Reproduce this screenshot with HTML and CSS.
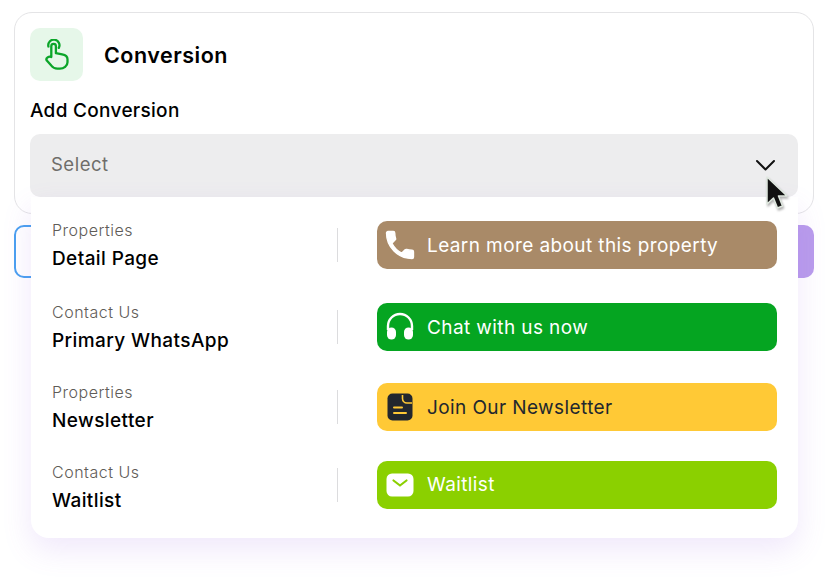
FILE: index.html
```html
<!DOCTYPE html>
<html lang="en">
<head>
    <meta charset="UTF-8">
    <meta name="viewport" content="width=device-width, initial-scale=1.0">
    <title>Conversion</title>
    <link rel="stylesheet" href="styles.css">
</head>
<body>

    <div class="page">
        <div class="card">
            <div class="card-head">
                <div class="icon-tile">
                    <svg width="24" height="32" viewBox="0 0 24 32" fill="none" stroke="#0ba529" stroke-width="2.3" stroke-linecap="round" stroke-linejoin="round">
                        <path d="M3.400 7.500a5.600 5.600 0 1 1 10.400 1.400"/>
                        <path d="M6.300 18V7.200a2.300 2.300 0 0 1 4.600 0v7l6.200 1.200c2.600.5 5.400 2 5.400 4.800v3c0 3.800-3.800 6.400-7.600 6.400h-2.600c-2.600 0-4.400-1-6-3l-4.500-5c-1.600-2.300 2.300-5 4.500-3.600z"/>
                    </svg>
                </div>
                <h2 class="card-title">Conversion</h2>
            </div>
            <label class="field-label">Add Conversion</label>
            <div class="select-box">
                <span>Select</span>
                <svg class="chevron" width="21" height="13" viewBox="0 0 21 13" fill="none" stroke="#111" stroke-width="2" stroke-linecap="round" stroke-linejoin="round">
                    <path d="M2 2l8.500 8.500L19 2"/>
                </svg>
            </div>
        </div>

        <div class="under-row">
            <div class="under-blue"></div>
            <div class="under-purple"></div>
        </div>

        <div class="dropdown">
            <div class="option option-first">
                <div class="option-text">
                    <p class="option-group">Properties</p>
                    <p class="option-name">Detail Page</p>
                </div>
                <div class="divider"></div>
                <div class="cta cta-brown">
                    <svg class="cta-icon" width="30" height="30" viewBox="2 2 20 20" fill="#fff" stroke="#fff" stroke-width="0.9" stroke-linejoin="round">
                        <path d="M6.620 10.790c1.440 2.830 3.760 5.140 6.590 6.590l2.200-2.200c.27-.27.67-.36 1.020-.24 1.120.37 2.330.57 3.570.57.55 0 1 .45 1 1V20c0 .55-.45 1-1 1-9.390 0-17-7.610-17-17 0-.55.45-1 1-1h3.500c.55 0 1 .45 1 1 0 1.250.2 2.450.57 3.570.11.35.03.74-.25 1.020l-2.200 2.200z"/>
                    </svg>
                    <span>Learn more about this property</span>
                </div>
            </div>

            <div class="option option-second">
                <div class="option-text">
                    <p class="option-group">Contact Us</p>
                    <p class="option-name">Primary WhatsApp</p>
                </div>
                <div class="divider"></div>
                <div class="cta cta-green">
                    <svg class="cta-icon" width="30" height="30" viewBox="0 0 30 30" fill="#fff">
                        <path d="M3 18v-4a12 12 0 0 1 24 0v4" fill="none" stroke="#fff" stroke-width="2.4"/>
                        <rect x="2" y="15.500" width="9" height="12" rx="4.500"/>
                        <rect x="19" y="15.500" width="9" height="12" rx="4.500"/>
                    </svg>
                    <span>Chat with us now</span>
                </div>
            </div>

            <div class="option option-third">
                <div class="option-text">
                    <p class="option-group">Properties</p>
                    <p class="option-name">Newsletter</p>
                </div>
                <div class="divider"></div>
                <div class="cta cta-yellow">
                    <svg class="cta-icon" width="30" height="30" viewBox="0 0 30 30" fill="none">
                        <rect x="2.500" y="1.500" width="25" height="27" rx="5" fill="#22272e"/>
                        <path d="M17.500 3v3.500a4.500 4.500 0 0 0 4.500 4.500h5" stroke="#ffc936" stroke-width="1.600"/>
                        <path d="M9 15.500h8M9 21h12" stroke="#ffc936" stroke-width="2" stroke-linecap="round"/>
                    </svg>
                    <span>Join Our Newsletter</span>
                </div>
            </div>

            <div class="option option-fourth">
                <div class="option-text">
                    <p class="option-group">Contact Us</p>
                    <p class="option-name">Waitlist</p>
                </div>
                <div class="divider"></div>
                <div class="cta cta-lime">
                    <svg class="cta-icon" width="30" height="30" viewBox="0 0 30 30" fill="none">
                        <rect x="1.500" y="3.500" width="27" height="23" rx="5.500" fill="#fff"/>
                        <path d="M8.500 10.500l6.500 5 6.500-5" stroke="#8bd000" stroke-width="2.200" stroke-linecap="round" stroke-linejoin="round"/>
                    </svg>
                    <span>Waitlist</span>
                </div>
            </div>
        </div>

        <svg class="cursor" width="24" height="36" viewBox="0 0 24 36">
            <path d="M3 2v27l6.500-6 4 10 5-2-4-10h8.500z" fill="#111" stroke="#dfe8df" stroke-width="1.500" stroke-linejoin="round"/>
        </svg>
    </div>

</body>
</html>
```

FILE: styles.css
```css
body {
    margin: 0;
    background-color: #fff;
    font-family: "Inter", "Liberation Sans", sans-serif;
    overflow: hidden;
}
p {
    margin: 0;
}
.page {
    position: relative;
    width: 825px;
    height: 579px;
    padding: 12px 11px 0 14px;
    box-sizing: border-box;
}
.card {
    height: 202px;
    box-sizing: border-box;
    padding: 15px 15px 0;
    border: 1px solid #e4e4e6;
    border-radius: 18px;
    background-color: #fff;
}
.card-head {
    display: flex;
    align-items: center;
    gap: 21px;
}
.icon-tile {
    width: 53px;
    height: 53px;
    border-radius: 10px;
    background-color: #e6f7e9;
    display: flex;
    align-items: center;
    justify-content: center;
}
.card-title {
    margin: 0;
    font-size: 21.5px;
    font-weight: 600;
    letter-spacing: 0.5px;
    color: #000;
}
.field-label {
    display: block;
    margin-top: 18px;
    font-size: 19px;
    font-weight: 500;
    line-height: 24px;
    letter-spacing: 0.3px;
    color: #000;
}
.select-box {
    height: 63px;
    margin-top: 11px;
    padding: 0 22px 0 21px;
    border-radius: 10px;
    background-color: #ededee;
    display: flex;
    align-items: center;
    justify-content: space-between;
    font-size: 18.5px;
    letter-spacing: 0.5px;
    color: #6f6d6a;
}
.select-box span {
    margin-bottom: 4px;
}
.under-row {
    display: flex;
    justify-content: space-between;
    margin-top: 11px;
}
.under-blue {
    width: 40px;
    height: 53px;
    box-sizing: border-box;
    border: 2px solid #4aa0f0;
    border-radius: 10px;
}
.under-purple {
    width: 40px;
    height: 53px;
    border-radius: 10px;
    background-color: #b99cec;
}
.dropdown {
    position: absolute;
    left: 31px;
    top: 197px;
    width: 767px;
    height: 341px;
    box-sizing: border-box;
    padding: 24px 21px 0;
    background-color: #fff;
    border-radius: 0 0 18px 18px;
    box-shadow: 0 12px 30px rgba(150, 90, 230, 0.14);
}
.option {
    display: flex;
    align-items: center;
    height: 48px;
}
.option-second {
    margin-top: 34px;
}
.option-third {
    margin-top: 32px;
}
.option-fourth {
    margin-top: 30px;
}
.option-text {
    width: 285px;
}
.option-fourth .option-text {
    padding-top: 4px;
}
.option-group {
    padding-top: 1px;
    font-size: 16px;
    font-weight: 300;
    line-height: 20px;
    letter-spacing: 0.5px;
    color: #5f5c58;
}
.option-name {
    margin-top: 7px;
    font-size: 19px;
    font-weight: 500;
    line-height: 24px;
    letter-spacing: 0.4px;
    color: #000;
}
.divider {
    width: 1px;
    height: 34px;
    background-color: #dcdcde;
}
.cta {
    margin-left: 39px;
    width: 400px;
    height: 48px;
    box-sizing: border-box;
    padding-left: 8px;
    border-radius: 10px;
    display: flex;
    align-items: center;
    gap: 12px;
    font-size: 19px;
    letter-spacing: 0.4px;
    color: #fff;
}
.cta-brown {
    background-color: #a98a68;
}
.cta-green {
    background-color: #05a521;
}
.cta-yellow {
    background-color: #ffc936;
    color: #22272e;
}
.cta-lime {
    background-color: #8bd000;
}
.cta-lime span {
    margin-bottom: 2px;
}
.cursor {
    position: absolute;
    left: 764px;
    top: 175px;
    filter: drop-shadow(1px 2px 1px rgba(0, 0, 0, 0.3));
}
```
